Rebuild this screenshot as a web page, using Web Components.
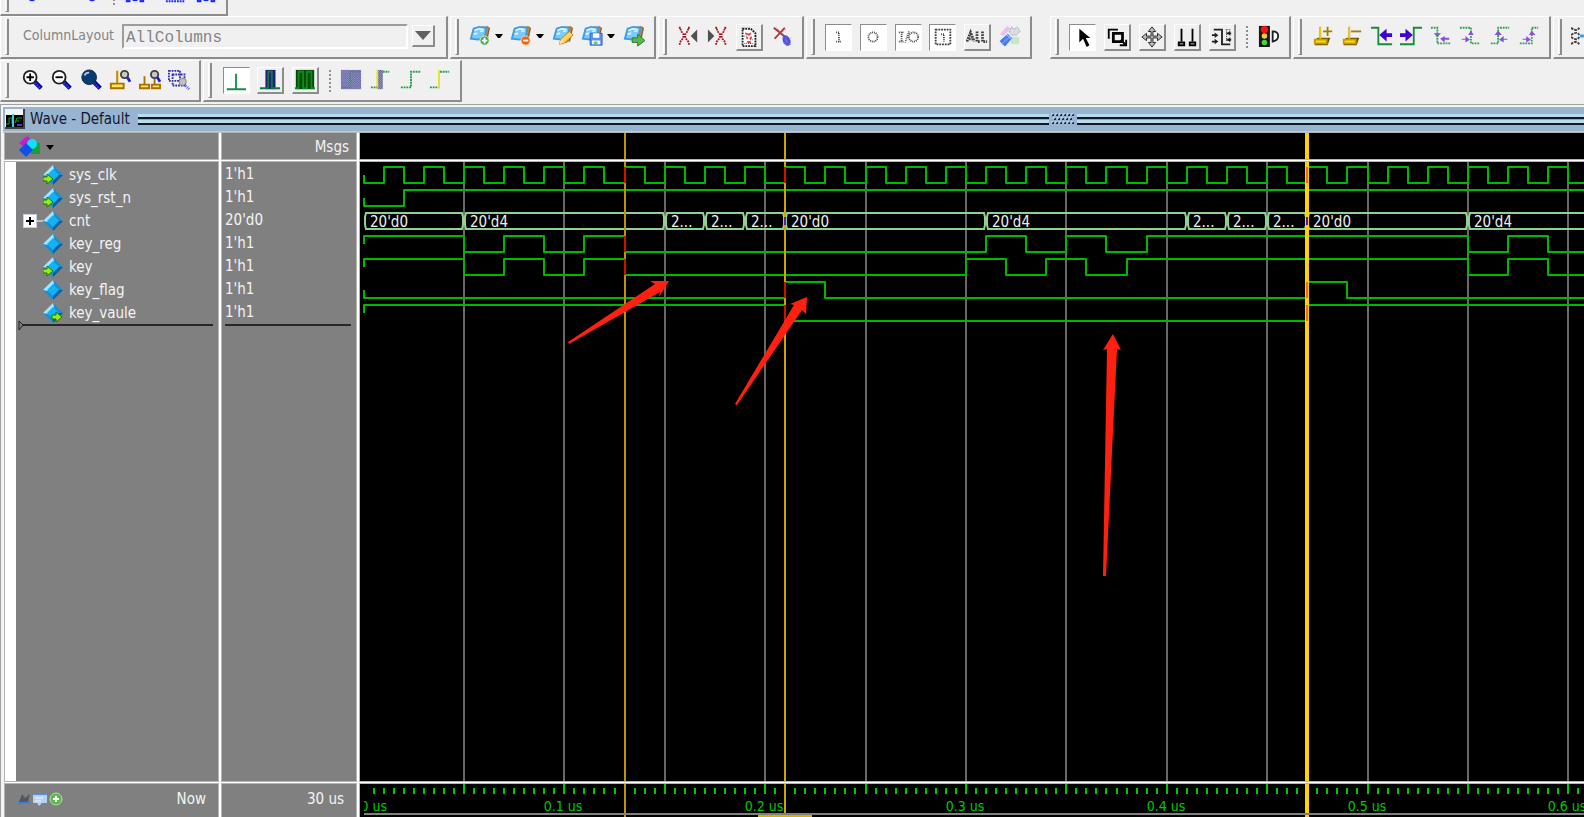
<!DOCTYPE html>
<html lang="en">
<head>
<meta charset="utf-8">
<title>Wave - Default</title>
<style>
  html, body { height: 100%; }
  body {
    margin: 0;
    display: flex;
    flex-direction: column;
    overflow: hidden;
    background: #f0f0f0;
    color: #202020;
    font: 15px/20px "DejaVu Sans Condensed", "DejaVu Sans", "Noto Sans", sans-serif;
  }
  .tools { display: flex; gap: 2px; overflow: hidden; flex: none; }
  .cut { height: 16px; align-items: flex-end; }
  .cut tool-bar { height: 43px; }
  .main { height: 43px; }
  .second { height: 42px; margin-top: 1px; }
  wave-window { flex: 1; min-height: 0; margin-top: 2px; }
</style>
</head>
<body>
<div class="tools cut">
  <tool-bar style="--w: 228px; --pad: 8px">
    <tool-button icon="dot" label="Step into"></tool-button>
    <tool-button icon="blank" label="Step over"></tool-button>
    <tool-button icon="dot" label="Step out"></tool-button>
    <tool-sep></tool-sep>
    <tool-button icon="pins" label="Run" menu></tool-button>
    <tool-button icon="lines" label="Run all"></tool-button>
    <tool-button icon="pins" label="Break"></tool-button>
  </tool-bar>
</div>
<div class="tools main">
  <tool-bar style="--w: 448px">
    <column-layout></column-layout>
  </tool-bar>
  <tool-bar style="--w: 206px">
    <tool-button icon="folderAdd" label="Add dataset" menu></tool-button>
    <tool-button icon="folderRemove" label="Remove dataset" menu></tool-button>
    <tool-button icon="folderEdit" label="Edit dataset"></tool-button>
    <tool-button icon="folderSave" label="Save dataset" menu></tool-button>
    <tool-button icon="folderGo" label="Export dataset"></tool-button>
  </tool-bar>
  <tool-bar style="--w: 146px">
    <tool-button icon="xLeft" label="Previous X"></tool-button>
    <tool-button icon="xRight" label="Next X"></tool-button>
    <tool-button icon="page" kind="raised" label="Report"></tool-button>
    <tool-button icon="xBug" label="Clear X"></tool-button>
  </tool-bar>
  <tool-bar style="--w: 226px">
    <tool-button icon="portI" kind="sunken" label="Inputs"></tool-button>
    <tool-button icon="portO" kind="sunken" label="Outputs"></tool-button>
    <tool-button icon="portIO" kind="sunken" label="Inouts"></tool-button>
    <tool-button icon="portInner" kind="sunken" label="Internals"></tool-button>
    <tool-button icon="all" kind="raised" label="All"></tool-button>
    <tool-button icon="wrench" label="Options"></tool-button>
  </tool-bar>
  <tool-bar style="--w: 241px; --before: 16px">
    <tool-button icon="pointer" kind="sunken" label="Select mode"></tool-button>
    <tool-button icon="zoomMode" kind="raised" label="Zoom mode"></tool-button>
    <tool-button icon="pan" kind="raised" label="Pan mode"></tool-button>
    <tool-button icon="twoCursor" kind="raised" label="Two cursor mode"></tool-button>
    <tool-button icon="edit" kind="raised" label="Edit mode"></tool-button>
    <tool-sep></tool-sep>
    <tool-button icon="traffic" label="Stop drawing"></tool-button>
  </tool-bar>
  <tool-bar style="--w: 258px">
    <tool-button icon="cursorAdd" label="Insert cursor"></tool-button>
    <tool-button icon="cursorDel" label="Delete cursor"></tool-button>
    <tool-button icon="prevEdge" label="Previous transition"></tool-button>
    <tool-button icon="nextEdge" label="Next transition"></tool-button>
    <tool-button icon="prevFall" label="Previous falling edge"></tool-button>
    <tool-button icon="nextFall" label="Next falling edge"></tool-button>
    <tool-button icon="prevRise" label="Previous rising edge"></tool-button>
    <tool-button icon="nextRise" label="Next rising edge"></tool-button>
  </tool-bar>
  <tool-bar style="--w: 50px">
    <tool-button icon="rings" label="Contributing signals"></tool-button>
  </tool-bar>
</div>
<div class="tools second">
  <tool-bar style="--w: 201px; --pad: 8px">
    <tool-button icon="zoomIn" label="Zoom in"></tool-button>
    <tool-button icon="zoomOut" label="Zoom out"></tool-button>
    <tool-button icon="zoomFull" label="Zoom full"></tool-button>
    <tool-button icon="zoomCursor" label="Zoom on cursor"></tool-button>
    <tool-button icon="zoomCursors" label="Zoom between cursors"></tool-button>
    <tool-button icon="zoomOther" label="Zoom other window"></tool-button>
  </tool-bar>
  <tool-bar style="--w: 259px; --pad: 7px">
    <tool-button icon="litEdge" kind="sunken" label="Expanded time off"></tool-button>
    <tool-button icon="deltas" kind="raised" label="Deltas mode"></tool-button>
    <tool-button icon="events" kind="raised" label="Events mode"></tool-button>
    <tool-sep></tool-sep>
    <tool-button icon="expAll" label="Expand all time"></tool-button>
    <tool-button icon="expCur" label="Expand at cursor"></tool-button>
    <tool-button icon="colAll" label="Collapse all time"></tool-button>
    <tool-button icon="colCur" label="Collapse at cursor"></tool-button>
  </tool-bar>
</div>
<wave-window>Wave - Default</wave-window>

<script>
(function () {
  // folder shared by the dataset buttons
  const folder = '<path d="M13 2l7-1 3 2-3 15-6 2z" fill="#c08a48"/><path d="M20 2l2 2-3 13" fill="none" stroke="#80542a"/><path d="M5 4l6-2 8 1-2 12-7 1-8-1z" fill="#7cc8f6" stroke="#3c9ce0" stroke-width="2"/><path d="M6 6l5-2 5 1M5 10l4-1M12 7l4-1" stroke="#d8f2ff" stroke-width="2" fill="none"/>';
  const glass = '<path d="M15 14l7 7" stroke="#000090" stroke-width="5"/><path d="M15 15l6 6" stroke="#3434e0" stroke-width="3" stroke-dasharray="2 1"/>';
  const bigX = '<path d="M2 2h2v3l3 4v4l-4 5v3M14 2h-2v3l-3 4v4l4 5v3" fill="none" stroke="#a81820" stroke-width="2" stroke-dasharray="2 1"/>';
  const post = '<path d="M9 2v13M2 16h14v5H2z" fill="#ffe45c" stroke="#a87000" stroke-width="2"/><path d="M10 2v13" stroke="#ffd820"/>';
  const mini = '<circle cx="17" cy="6" r="4" fill="#c8c8c8" stroke="#404040" stroke-width="2"/><path d="M20 9l3 5" stroke="#2020d0" stroke-width="3"/>';
  const yellowPost = '<path d="M3 17l3-3h14l-3 8H3z" fill="#705400"/><path d="M9 2v13M3 16h13v4H3z" fill="#ffe000" stroke="#c89800" stroke-width="2"/><path d="M9 2v13M5 18h9" stroke="#ffe000"/>';

  const icons = {
    blank: "",
    dot: '<circle cx="12" cy="17" r="4" fill="#1428ff"/>',
    pins: '<path d="M3 21v-6M6 21v-6M18 21v-6M21 21v-6M2 21h5M17 21h5" stroke="#1428ff" stroke-width="2"/><circle cx="12" cy="17" r="4" fill="#1428ff"/>',
    lines: '<path d="M1 18h21M1 21h21" stroke="#1428ff" stroke-width="2" stroke-dasharray="2 1"/>',
    folderAdd: folder + '<circle cx="17" cy="17" r="5" fill="#4aa848" stroke="#d8f0d0"/><path d="M14 17h6M17 14v6" stroke="#fff" stroke-width="2"/>',
    folderRemove: folder + '<circle cx="17" cy="17" r="5" fill="#f06010" stroke="#ffd8b0"/><path d="M14 17h6" stroke="#fff" stroke-width="2"/>',
    folderEdit: folder + '<path d="M8 21l2-6 9-8 4 4-10 9z" fill="#ffd35a" stroke="#c08020"/><path d="M8 21l2-6 3 4z" fill="#f7e2b8"/>',
    folderSave: folder + '<path d="M10 9h13v13H10z" fill="#5b8ff0" stroke="#2860c8"/><path d="M13 9h7v5h-7zM12 17h9v4h-9z" fill="#fff"/><path d="M14 18h4v3h-4z" fill="#70c070"/>',
    folderGo: folder + '<path d="M10 14h6v-4l8 7-8 6v-4h-6z" fill="#58b848" stroke="#287828"/>',
    xLeft: '<g transform="translate(0 1)">' + bigX + '</g><path d="M22 5v14l-7-7z" fill="#505050"/>',
    xRight: '<g transform="translate(7 1)">' + bigX + '</g><path d="M1 5v14l7-7z" fill="#505050"/>',
    page: '<path d="M5 3h9l5 5v14H5z" fill="#fff" stroke="#202020" stroke-width="2" stroke-dasharray="2 1"/><path d="M8 8l3 1M14 8l-3 2M9 13h2M15 12l-2 2M10 17l4 1" stroke="#f03030" stroke-width="2"/><path d="M7 11h4M13 15h4M7 19h10" stroke="#303030" stroke-dasharray="1 1"/>',
    xBug: '<path d="M3 3l15 12M15 3L4 15" stroke="#c02830" stroke-width="2"/><path d="M6 3L16 14M16 5L4 13" stroke="#707070" stroke-dasharray="1 1"/><ellipse cx="17" cy="17" rx="4" ry="6" fill="#5050d8" transform="rotate(-25 17 17)"/><path d="M12 13l10 9M13 20l9-6M16 11l1 12" stroke="#8080e8" stroke-dasharray="1 1"/>',
    portI: '<path d="M10 7h3v10M10 17h5" fill="none" stroke="#404040" stroke-width="2" stroke-dasharray="1 1"/>',
    portO: '<circle cx="12" cy="12" r="5" fill="none" stroke="#404040" stroke-width="2" stroke-dasharray="1 1"/>',
    portIO: '<path d="M2 7h6M5 7v9M2 17h6M13 6l-4 12" fill="none" stroke="#404040" stroke-width="2" stroke-dasharray="1 1"/><circle cx="18" cy="12" r="5" fill="none" stroke="#404040" stroke-width="2" stroke-dasharray="1 1"/>',
    portInner: '<path d="M4 4h16v16H4z" fill="none" stroke="#404040" stroke-width="2" stroke-dasharray="2 1"/><path d="M10 9h3v9" fill="none" stroke="#404040" stroke-width="2" stroke-dasharray="1 1"/>',
    all: '<path d="M1 17l4-10 4 10M3 14h4M12 6v11h4M18 6v11h5" fill="none" stroke="#404040" stroke-width="3" stroke-dasharray="2 1"/>',
    wrench: '<path d="M1 10l8-9 4 3-8 8z" fill="#e4c4ea"/><path d="M13 13h9v8h-9z" fill="#c8e6cc"/><path d="M14 2l2 3 4-3 3 5-4 4h-5l-3-3z" fill="#d8dede" stroke="#889090" stroke-dasharray="1 1"/><path d="M2 19l9-8M5 22l8-9" stroke="#4878f0" stroke-width="4"/><path d="M3 21l9-9" stroke="#88b0ff" stroke-width="2" stroke-dasharray="1 1"/><path d="M9 11l5 5" stroke="#a8c8ff" stroke-width="2" stroke-dasharray="1 1"/>',
    pointer: '<path d="M8 3v15l4-4 4 9 3-2-4-8h5z" fill="#000"/>',
    zoomMode: '<path d="M3 14V4h10" fill="none" stroke="#000" stroke-width="2"/><path d="M8 8h10v9H8z" fill="none" stroke="#000" stroke-width="3"/><path d="M16 15l6 6m0-6v6h-7" fill="none" stroke="#000" stroke-width="2"/>',
    pan: '<path d="M12 1l4 5h-3v5h5V8l5 4-5 4v-3h-5v5h3l-4 5-4-5h3v-5H6v3l-5-4 5-4v3h5V6H8z" fill="#c0c0c0" stroke="#202020"/>',
    twoCursor: '<path d="M6 3v14M18 3v14" stroke="#000" stroke-width="2"/><path d="M3 18h6v3H3zM15 18h6v3h-6z" fill="#fff" stroke="#000" stroke-width="2"/>',
    edit: '<path d="M3 4h9v16h9" fill="none" stroke="#202020" stroke-width="2"/><path d="M16 4h5M17 5v12" stroke="#202020" stroke-dasharray="1 1"/><path d="M1 10h5M1 17h5M17 8h5M17 15h5" stroke="#202020" stroke-width="2"/><path d="M4 7l4 3-4 3M4 14l4 3-4 3M21 5l-3 3 3 3M21 12l-3 3 3 3" fill="#202020"/>',
    traffic: '<path d="M1 1h12v23H1z" fill="#181818"/><circle cx="7" cy="5" r="4" fill="#ff1010"/><circle cx="7" cy="12" r="3" fill="#e8d040"/><circle cx="7" cy="19" r="3" fill="#40d840"/><path d="M16 7v11q6-1 6-6t-6-5z" fill="#fff" stroke="#202020" stroke-width="2"/>',
    cursorAdd: yellowPost + '<path d="M12 7h10M17 2v10" stroke="#a08000" stroke-width="2"/>',
    cursorDel: yellowPost + '<path d="M11 7h11" stroke="#a08000" stroke-width="2"/>',
    prevEdge: '<path d="M0 3h8v18h15" fill="none" stroke="#148c38" stroke-width="2"/><path d="M23 9h-6V4l-8 7 8 7v-5h6z" fill="#4000d8"/>',
    nextEdge: '<path d="M0 21h15V3h9" fill="none" stroke="#148c38" stroke-width="2"/><path d="M0 9h6V4l8 7-8 7v-5H0z" fill="#4000d8"/>',
    prevFall: '<path d="M1 3h7v17h15" fill="none" stroke="#30a050" stroke-dasharray="2 1" stroke-width="2"/><path d="M4 9l4 4 4-4zM21 14h-5v-2l-5 3 5 4v-3h5z" fill="#8850d8"/>',
    nextFall: '<path d="M1 3h12v17h10" fill="none" stroke="#30a050" stroke-dasharray="2 1" stroke-width="2"/><path d="M10 11l3-5 3 5zM3 15h4v-3l5 4-5 3v-3H3z" fill="#8850d8"/>',
    prevRise: '<path d="M2 20h8V3h12" fill="none" stroke="#30a050" stroke-dasharray="2 1" stroke-width="2"/><path d="M6 11l4-5 4 5zM20 15h-4v-3l-5 4 5 3v-3h4z" fill="#8850d8"/>',
    nextRise: '<path d="M2 20h13V3h7" fill="none" stroke="#30a050" stroke-dasharray="2 1" stroke-width="2"/><path d="M12 11l3-5 4 5zM5 15h4v-3l5 4-5 3v-3H5z" fill="#8850d8"/>',
    rings: '<path d="M0 3q6 5 9 0M0 11q7-5 9 0M0 13q6 5 9 0M0 21q5-5 9 0" fill="none" stroke="#404040" stroke-width="2" stroke-dasharray="3 1"/><path d="M10 12h4" stroke="#1898f0" stroke-width="3"/>',
    zoomIn: glass + '<circle cx="10" cy="9" r="7" fill="#fff" stroke="#202020" stroke-width="2"/><path d="M6 9h8M10 5v8" stroke="#000" stroke-width="2"/>',
    zoomOut: glass + '<circle cx="10" cy="9" r="7" fill="#fff" stroke="#202020" stroke-width="2"/><path d="M6 9h8" stroke="#000" stroke-width="2"/>',
    zoomFull: glass + '<circle cx="10" cy="9" r="8" fill="#063c70" stroke="#10243c"/><path d="M5 7q1-3 5-3" fill="none" stroke="#a8d0f0" stroke-width="2"/>',
    zoomCursor: post + mini,
    zoomCursors: '<path d="M6 8v8M1 17h10v4H1zM17 11v5M14 17h9v4h-9z" fill="#ffe45c" stroke="#a87000" stroke-width="2"/>' + mini,
    zoomOther: '<path d="M1 2h12v11H1zM5 6h13v12H5z" fill="none" stroke="#3030a8" stroke-width="2" stroke-dasharray="2 1"/><circle cx="16" cy="14" r="4" fill="#c0c0c0" stroke="#808080"/><path d="M18 17l5 5" stroke="#4858e8" stroke-width="3" stroke-dasharray="1 1"/>',
    litEdge: '<path d="M2 21h21M12 4v17" stroke="#148c48" stroke-width="2"/>',
    deltas: '<path d="M7 1h11v21H7z" fill="#202078"/><path d="M1 21h9V3h4v18h9" fill="none" stroke="#107840" stroke-width="2"/>',
    events: '<path d="M2 1h20v21H2z" fill="#004c00"/><path d="M1 21h4V3h5v18h4V3h5v18h4" fill="none" stroke="#128828" stroke-width="2"/>',
    expAll: '<rect x="1" y="1" width="22" height="21" fill="url(#dither)"/><path d="M2 20h9V3h11" fill="none" stroke="#208858" stroke-dasharray="1 1"/>',
    expCur: '<rect x="8" y="1" width="6" height="21" fill="url(#dither)"/><path d="M8 1v21" stroke="#e8e020" stroke-width="2"/><path d="M1 20h7M14 3h7" stroke="#209848" stroke-dasharray="2 1" stroke-width="2"/>',
    colAll: '<path d="M1 20h11V3h10" fill="none" stroke="#209848" stroke-dasharray="2 1" stroke-width="2"/>',
    colCur: '<path d="M1 20h10M12 3h10" stroke="#209848" stroke-dasharray="2 1" stroke-width="2"/><path d="M11 1v20" stroke="#e8e020" stroke-width="2"/>'
  };
  const dither = '<defs><pattern id="dither" width="2" height="2" patternUnits="userSpaceOnUse"><path d="M0 0h2v2H0z" fill="#a8a8d0"/><path d="M0 0h1v1H0zM1 1h1v1H1z" fill="#505098"/></pattern></defs>';

  function attach(el, html) {
    const tpl = document.createElement("template");
    tpl.innerHTML = html;
    const root = el.attachShadow({ mode: "open" });
    root.appendChild(tpl.content.cloneNode(true));
    return root;
  }

  class ToolBar extends HTMLElement {
    constructor() {
      super();
      attach(this, `
        <style>
          :host {
            box-sizing: border-box;
            width: var(--w);
            margin-left: var(--before, 0);
            flex: none;
            display: flex;
            align-items: stretch;
            padding: 2px 5px 2px 4px;
            border-right: 2px solid #8c8c8c;
            border-bottom: 2px solid #8c8c8c;
            border-top: 1px solid #fff;
            border-left: 1px solid #fff;
          }
          i { flex: none; width: 1px; border-left: 1px solid #fff; border-right: 2px solid #8c8c8c; border-bottom: 1px solid #8c8c8c; margin-right: var(--pad, 6px); }
          div { flex: 1; display: flex; align-items: center; min-width: 0; }
        </style>
        <i></i><div><slot></slot></div>`);
    }
  }

  class ToolSep extends HTMLElement {
    constructor() {
      super();
      attach(this, `
        <style>
          :host { flex: none; width: 14px; display: flex; justify-content: center; }
          i { height: 22px; border-left: 2px dotted #909090; }
        </style><i></i>`);
    }
  }

  class ToolButton extends HTMLElement {
    connectedCallback() {
      if (this.shadowRoot) return;
      const menu = this.hasAttribute("menu");
      const kind = this.getAttribute("kind") || "";
      attach(this, `
        <style>
          :host { flex: ${menu ? 41 : kind ? 35 : 30} 1 0; min-width: 0; display: flex; justify-content: center; }
          button { display: flex; align-items: center; gap: 4px; padding: 0 0 2px; border: 0; background: none; height: 26px; font: inherit; }
          .raised, .sunken { width: 27px; height: 27px; padding: 0; justify-content: center; box-sizing: border-box; border: 1px solid; }
          .raised { border-width: 1px 2px 2px 1px; border-color: #fff #8c8c8c #8c8c8c #fff; }
          .sunken { background: #fff; border-color: #8c8c8c #fff #fff #8c8c8c; }
          svg { display: block; flex: none; }
        </style>
        <button type="button" class="${kind}" aria-label="${this.getAttribute("label")}">
          <svg width="22" height="22" viewBox="0 0 24 24">${dither}${icons[this.getAttribute("icon")]}</svg>
          ${menu ? '<svg width="8" height="5"><path d="M0 0h8L5 4H3z"/></svg>' : ""}
        </button>`);
    }
  }

  class ColumnLayout extends HTMLElement {
    constructor() {
      super();
      attach(this, `
        <style>
          :host { flex: 1; display: flex; align-items: center; padding: 0 6px 2px 8px; color: #848484; }
          label { flex: none; width: 99px; padding-bottom: 2px; font-size: 14px; }
          select {
            flex: 1; min-width: 0; height: 25px; padding: 3px 2px 0; appearance: none; border-radius: 0;
            border: 2px solid; border-color: #9c9c9c #fff #fff #9c9c9c; background: #f0f0f0;
            color: #848484; opacity: 1; font: 16px/18px "Liberation Mono", monospace;
          }
          span { flex: none; width: 23px; height: 22px; margin-left: 4px; box-sizing: border-box; display: flex; align-items: center; justify-content: center; border: 1px solid; border-width: 1px 2px 2px 1px; border-color: #fff #8c8c8c #8c8c8c #fff; }
        </style>
        <label for="cols">ColumnLayout</label>
        <select id="cols" disabled><option>AllColumns</option></select>
        <span><svg width="16" height="10"><path d="M0 0h16L8 9z" fill="#606060"/></svg></span>`);
    }
  }

  const diamond = '<path d="M10 0l10 10-10 10L0 10z" fill="#1490d8"/><path d="M10 0L0 10l5 1 6-7z" fill="#a8e4fa"/><path d="M10 4l6 6-6 6-6-6z" fill="#10b4f4"/><path d="M20 10L10 20v-4l6-6z" fill="#085c98"/>';
  const goArrow = '<path d="M0 3h4V0l6 5-6 5V7H0z" fill="#90f010" stroke="#207010"/>';

  class SignalRow extends HTMLElement {
    connectedCallback() {
      if (this.shadowRoot) return;
      const dir = this.getAttribute("dir-kind");
      const arrow = dir === "in" ? `<g transform="translate(0 9)">${goArrow}</g>` : dir === "out" ? `<g transform="translate(9 9)">${goArrow}</g>` : "";
      attach(this, `
        <style>
          :host { display: flex; align-items: center; height: 23px; }
          .exp { width: 27px; box-sizing: border-box; padding-left: 7px; display: flex; align-items: center; }
          button { flex: none; width: 14px; height: 14px; padding: 0; border: 1px solid #c8d0e0; background: #fff; display: block; }
          hr { flex: 1; border: 0; border-top: 2px solid #c0c0c0; margin: 0; }
          svg { display: block; }
          .name { margin-left: 6px; }
        </style>
        <span class="exp">${this.hasAttribute("bus") ? '<button type="button" aria-label="Expand"><svg width="12" height="12"><path d="M2 6h8M6 2v8" stroke="#000" stroke-width="2"/></svg></button><hr>' : ""}</span>
        <svg width="20" height="20" viewBox="0 0 20 20">${diamond}${arrow}</svg>
        <span class="name"><slot></slot></span>`);
    }
  }

  const START = 4;        // x of time zero
  const PX_PER_NS = 2.008;
  const END_NS = 1500;
  const ROW = 23;
  const TOP = 5;
  const x = ns => START + Math.floor(ns * PX_PER_NS);

  const clk = [];
  for (let t = 10; t < END_NS; t += 10) clk.push(t);
  // [level at time zero, times of the transitions]
  const signals = [
    [0, clk],
    [0, [20]],
    null,
    [1, [50, 70, 90, 110, 130, 310, 330, 350, 370, 390, 550, 570, 590]],
    [1, [50, 70, 90, 110, 130, 300, 320, 340, 360, 380, 550, 570, 590]],
    [0, [210, 230, 470, 490]],
    [1, [210, 470]]
  ];
  const bus = [[0, "20'd0"], [50, "20'd4"], [150, "2..."], [170, "2..."], [190, "2..."], [210, "20'd0"],
    [310, "20'd4"], [410, "2..."], [430, "2..."], [450, "2..."], [470, "20'd0"], [550, "20'd4"], [800, ""]];
  const cursors = [[130, "#c09400", 2], [210, "#d0a400", 2], [470, "#ffd200", 4]];

  function cursorLines() {
    return cursors.map(([t, c, w]) => `<path d="M${x(t)} 0v2000" stroke="${c}" stroke-width="${w}"/>`).join("");
  }

  function drawSignals() {
    let out = "", marks = "";
    signals.forEach((s, i) => {
      if (!s) return;
      const hi = TOP + i * ROW, lo = hi + 16;
      let level = s[0];
      let d = `M${START} ${hi + 8}V${level ? hi : lo}`;
      s[1].forEach(t => {
        d += `H${x(t)}V${level ? lo : hi}`;
        level = 1 - level;
        const cur = cursors.find(c => c[0] === t);
        if (cur) marks += `<path d="M${x(t)} ${hi}V${lo}" stroke="${t === 470 ? "#ff6a00" : "#d01000"}" stroke-width="2"/>`;
      });
      d += `H${x(END_NS)}`;
      out += `<path d="${d}" fill="none" stroke="#00b800" stroke-width="2" stroke-linejoin="round"/>`;
    });
    const top = TOP + 2 * ROW, bot = top + 16;
    for (let i = 0; i < bus.length - 1; i++) {
      const a = x(bus[i][0]), b = x(bus[i + 1][0]);
      out += `<path d="M${a + 2} ${top}H${b - 2}l1 4v8l-1 4H${a + 2}l-1-4v-8z" fill="none" stroke="#90d090" stroke-width="2"/>`;
      out += `<text x="${a + 6}" y="${top + 14}" fill="#f0f0f0">${bus[i][1]}</text>`;
    }
    [210, 470].forEach(t => { marks += `<path d="M${x(t)} ${top + 4}V${bot - 4}" stroke="#5020a0" stroke-width="2"/>`; });
    return [out, marks];
  }

  function drawGrid() {
    let out = "";
    for (let t = 50; t < END_NS; t += 50) out += `<path d="M${x(t)} 0v2000" stroke="#686868" stroke-width="2"/>`;
    return out;
  }

  function drawRuler() {
    let out = "";
    for (let t = 5; t < END_NS; t += 5) {
      out += t % 50 ? `M${x(t)} 4v6` : `M${x(t)} 0v10`;
    }
    let s = `<path d="${out}" stroke="#00c800" stroke-width="2"/>`;
    s += `<svg x="${START}" y="0" width="100%" height="33" overflow="hidden"><text x="23" y="27" text-anchor="end" fill="#00c800">0 us</text></svg>`;
    for (let k = 1; k < 7; k++) s += `<text x="${x(k * 100) - 1}" y="27" text-anchor="middle" fill="#00c800">0.${k} us</text>`;
    return s;
  }

  class WaveWindow extends HTMLElement {
    constructor() {
      super();
      const [lines, marks] = drawSignals();
      attach(this, `
        <style>
          :host { display: flex; flex-direction: column; border-top: 1px solid #a0a0a0; border-left: 1px solid #a0a0a0; padding: 2px 0 0 2px; background: #f4f4f4; }
          header { flex: none; display: flex; align-items: center; height: 24px; padding-left: 2px; background: #99b4d1; border-bottom: 2px solid #c8c8c8; color: #10182c; }
          .logo { display: block; margin-right: 5px; }
          h1 { margin: 0 8px 0 0; font: inherit; }
          .bar { height: 11px; background: linear-gradient(#b8dcec 0 3px, #101828 3px 5px, #90a8b8 5px 6px, #b8dcec 6px 9px, #101828 9px 11px); }
          .one { flex: 911 1 0; } .two { flex: 507 1 0; }
          .dots { margin: 0 2px; }
          main {
            flex: 1; min-height: 0; margin-left: 2px; display: grid;
            grid-template: 26px minmax(0, 1fr) 33px / 213px 134px minmax(0, 1fr);
            gap: 3px 4px; background: #fff; color: #f4f4f4;
          }
          main > * { min-width: 0; overflow: hidden; background: #808080; box-shadow: 0 0 0 1px #b4b4b4; }
          main > .black { background: #000; }
          .black svg { display: block; width: 100%; height: 100%; }
          .head { display: flex; align-items: center; padding: 2px 7px 0 14px; }
          .head button { display: flex; align-items: center; gap: 4px; padding: 0; border: 0; background: none; }
          .names { border-left: 11px solid #fff; padding-top: 1px; }
          .values { padding: 1px 3px 0; }
          .values p { margin: 0; height: 23px; line-height: 23px; }
          .end { display: flex; align-items: center; height: 2px; margin: 0 5px 0 2px; }
          .end svg { overflow: visible; }
          .end::after { content: ""; flex: 1; border-top: 2px solid #282828; }
          .values .end { margin: 0 2px 0 0; }
          .foot { display: flex; align-items: center; justify-content: space-between; padding: 0 12px 4px 12px; }
          .right { justify-content: flex-end; }
          .wave { position: relative; }
          .arrows { position: absolute; left: 0; top: 0; }
        </style>
        <header>
          <svg class="logo" width="20" height="20"><path d="M0 0h20v20H0z" fill="#404040"/><path d="M0 0h18v18H0z" fill="#f4f4f4"/><path d="M1 6h17v12H1z"/><path d="M1 15h3V9h3v6M10 14l2-5h5M11 12h3" fill="none" stroke="#00b030"/><path d="M8 5v13" stroke="#40c8e0" stroke-width="2"/><path d="M12 16h5" stroke="#3838e0" stroke-width="2"/></svg>
          <h1><slot></slot></h1>
          <span class="bar one"></span>
          <svg class="dots" width="24" height="12"><path d="M1 2h22M3 6h20M1 10h22" stroke="#202c40" stroke-width="2" stroke-dasharray="2 2"/><path d="M0 1h22M2 5h20M0 9h22" stroke="#d8ecf8" stroke-dasharray="2 2"/></svg>
          <span class="bar two"></span>
        </header>
        <main>
          <div class="head">
            <button type="button" aria-label="Object filter">
              <svg width="23" height="22"><path d="M0 7l8-7 5 4-7 8z" fill="#c020d0"/><path d="M12 7h9v11h-9z" fill="#18a038"/><circle cx="13" cy="8" r="5" fill="#10e0fc"/><path d="M7 7l7 7-7 7-7-7z" fill="#1050e8"/></svg>
              <svg width="8" height="5"><path d="M0 0h8L4 5z"/></svg>
            </button>
          </div>
          <div class="head right">Msgs</div>
          <div class="black"><svg>${cursorLines()}</svg></div>
          <div class="names">
            <signal-row dir-kind="in">sys_clk</signal-row>
            <signal-row dir-kind="in">sys_rst_n</signal-row>
            <signal-row bus>cnt</signal-row>
            <signal-row>key_reg</signal-row>
            <signal-row dir-kind="in">key</signal-row>
            <signal-row>key_flag</signal-row>
            <signal-row dir-kind="out">key_vaule</signal-row>
            <div class="end"><svg width="5" height="9"><path d="M1 0v9l4-5z" fill="#808080" stroke="#202020"/></svg></div>
          </div>
          <div class="values">
            <p>1'h1</p><p>1'h1</p><p>20'd0</p><p>1'h1</p><p>1'h1</p><p>1'h1</p><p>1'h1</p>
            <div class="end"></div>
          </div>
          <div class="black wave">
            <svg font-size="15">${drawGrid()}${lines}${cursorLines()}${marks}</svg>
            <svg class="arrows" fill="#ff2010">
              <path d="M208 180L295 122 290 119 309 119 299 135 300 130 209 182z"/>
              <path d="M375 242L434 143 430 142 447 135 446 152 442 148 377 243z"/>
              <path d="M743 414L747 187 743 188 753 172 761 188 757 187 746 414z"/>
            </svg>
          </div>
          <div class="foot">
            <svg width="46" height="16"><path d="M2 11l3-8 3 4 5-4-2 8z" fill="#505860"/><path d="M1 12h12" stroke="#4080d8" stroke-width="2"/><path d="M16 2h14v10h-5l-3 3-2-3h-4z" fill="#b8d0f4"/><path d="M16 2h14v2H16z" fill="#5888d8"/><path d="M18 7h8M18 10h6" stroke="#f4f8ff"/><circle cx="39" cy="8" r="6" fill="#60b850" stroke="#b0e0a0"/><path d="M36 8h6M39 5v6" stroke="#fff" stroke-width="2"/></svg>
            <span>Now</span>
          </div>
          <div class="foot right">30 us</div>
          <div class="black">
            <svg font-size="14">${drawRuler()}${cursorLines()}
              <path d="M4 30h3000" stroke="#808080" stroke-width="2"/>
              <path d="M399 40v-8h52v8" fill="#706000" stroke="#d8b000" stroke-width="2"/></svg>
          </div>
        </main>`);
    }
  }

  customElements.define("tool-bar", ToolBar);
  customElements.define("tool-sep", ToolSep);
  customElements.define("tool-button", ToolButton);
  customElements.define("column-layout", ColumnLayout);
  customElements.define("signal-row", SignalRow);
  customElements.define("wave-window", WaveWindow);
})();
</script>
</body>
</html>
